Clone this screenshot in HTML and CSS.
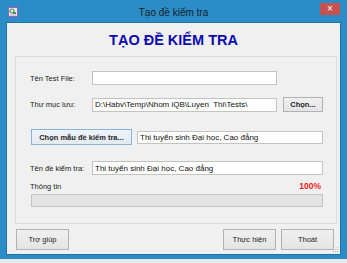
FILE: index.html
```html
<!DOCTYPE html>
<html>

<head>
    <title>Tạo đề kiểm tra</title>
    <link rel="stylesheet" href="styles.css">
</head>

<body>
    <div class="window">
        <div class="titlebar">
            <div class="icon-box">
                <svg class="app-icon" width="10" height="10" viewBox="0 0 10 10">
                    <rect x="0.5" y="0.5" width="9" height="9" fill="#efe6f6" stroke="#9a5fc4"/>
                    <circle cx="4" cy="4" r="2" fill="none" stroke="#3f9c3a" stroke-width="1.2"/>
                    <rect x="5" y="5" width="3" height="2" fill="#3f9c3a"/>
                    <rect x="1.5" y="7.5" width="7" height="1" fill="#c9a6e3"/>
                </svg>
            </div>
            <div class="title">Tạo đề kiểm tra</div>
            <div class="close">×</div>
        </div>

        <div class="client">
            <h1 class="heading">TẠO ĐỀ KIỂM TRA</h1>

            <div class="group">
                <div class="row row-file">
                    <label class="label">Tên Test File:</label>
                    <input class="field field-short" type="text" value="">
                </div>
                <div class="row row-folder">
                    <label class="label">Thư mục lưu:</label>
                    <input class="field field-short" type="text" value="D:\Habv\Temp\Nhom iQB\Luyen  Thi\Tests\">
                    <button class="btn btn-bold btn-pick">Chọn...</button>
                </div>
                <div class="row row-template">
                    <button class="btn btn-bold btn-template">Chọn mẫu đề kiểm tra...</button>
                    <input class="field field-template" type="text" value="Thi tuyển sinh Đại học, Cao đẳng">
                </div>
                <div class="row row-name">
                    <label class="label">Tên đề kiểm tra:</label>
                    <input class="field field-long" type="text" value="Thi tuyển sinh Đại học, Cao đẳng">
                </div>
                <div class="row row-info">
                    <span class="label">Thông tin</span>
                    <span class="percent">100%</span>
                </div>
                <div class="progress"></div>
            </div>

            <div class="footer">
                <button class="btn btn-footer">Trợ giúp</button>
                <span class="spacer"></span>
                <button class="btn btn-footer">Thực hiện</button>
                <button class="btn btn-footer btn-exit">Thoát</button>
            </div>

            <svg class="grip" width="6" height="6" viewBox="0 0 6 6">
                <rect x="4" y="0" width="1" height="1" fill="#b8b8b8"/>
                <rect x="2" y="2" width="1" height="1" fill="#b8b8b8"/>
                <rect x="4" y="2" width="1" height="1" fill="#b8b8b8"/>
                <rect x="0" y="4" width="1" height="1" fill="#b8b8b8"/>
                <rect x="2" y="4" width="1" height="1" fill="#b8b8b8"/>
                <rect x="4" y="4" width="1" height="1" fill="#b8b8b8"/>
            </svg>
        </div>
    </div>
</body>

</html>
```

FILE: styles.css
```css
body {
    margin: 0;
    background: #e6eaed;
    font-family: "Liberation Sans", Arial, sans-serif;
    color: #1e1e1e;
}

.window {
    width: 347px;
    height: 259px;
    box-sizing: border-box;
    padding: 0 7px 5px 7px;
    background: #2b8cc6;
}

/* title bar */
.titlebar {
    display: flex;
    align-items: flex-start;
    height: 23px;
}

.icon-box {
    width: 20px;
}

.app-icon {
    display: block;
    margin: 7px 0 0 1px;
}

.title {
    flex: 1;
    margin-top: 7px;
    font-size: 10px;
    line-height: 12px;
    text-align: center;
    color: #14202a;
}

.close {
    width: 20px;
    height: 12px;
    margin-top: 3px;
    background: #c75050;
    color: #fff;
    font-size: 10px;
    line-height: 12px;
    text-align: center;
}

/* client area */
.client {
    position: relative;
    height: 231px;
    background: #f0f0f0;
    box-shadow: 0 0 0 1px #1f72a6;
}

.heading {
    margin: 0 0 6px 0;
    padding-top: 7px;
    height: 20px;
    font-size: 14.5px;
    line-height: 20px;
    font-weight: bold;
    text-align: center;
    color: #0c0cb2;
}

.group {
    height: 168px;
    box-sizing: border-box;
    margin: 0 3px 0 8px;
    padding: 14px 13px 0 14px;
    border: 1px solid #dcdcdc;
}

.row {
    display: flex;
    align-items: center;
}

.row-file {
    height: 14px;
}

.row-folder {
    height: 15px;
    margin-top: 12px;
}

.row-template {
    height: 16px;
    margin-top: 17px;
}

.row-name {
    height: 14px;
    margin-top: 16px;
}

.row-info {
    height: 10px;
    margin-top: 6px;
    justify-content: space-between;
}

.label {
    width: 62px;
    flex-shrink: 0;
    font-size: 7.5px;
    color: #222;
}

.field {
    height: 14px;
    box-sizing: border-box;
    margin: 0;
    padding: 0 2px;
    border: 1px solid #c3c3c3;
    background: #fff;
    font-family: "Liberation Sans", Arial, sans-serif;
    font-size: 8px;
    color: #111;
    outline: none;
}

.field-short {
    width: 185px;
}

.field-template {
    width: 186px;
    height: 13px;
    margin-left: 5px;
}

.field-long {
    width: 231px;
}

.percent {
    margin-right: 2px;
    font-size: 8.5px;
    font-weight: bold;
    color: #f01c1c;
}

.progress {
    height: 13px;
    box-sizing: border-box;
    margin: 3px 0 0 1px;
    border: 1px solid #c4c4c4;
    background: #e4e4e4;
}

/* buttons */
.btn {
    box-sizing: border-box;
    margin: 0;
    padding: 0;
    border: 1px solid #b2b2b2;
    background: linear-gradient(#f0f0f0, #e4e4e4);
    font-family: "Liberation Sans", Arial, sans-serif;
    font-size: 7.5px;
    color: #1e1e1e;
}

.btn-bold {
    font-weight: bold;
}

.btn-pick {
    width: 40px;
    height: 15px;
    margin-left: 6px;
}

.btn-template {
    width: 101px;
    height: 16px;
    margin-left: 1px;
    border-color: #86b5de;
    background: linear-gradient(#eef3f8, #e2eaf2);
}

.footer {
    display: flex;
    padding: 5px 6px 0 9px;
}

.spacer {
    flex: 1;
}

.btn-footer {
    width: 53px;
    height: 21px;
}

.btn-exit {
    margin-left: 5px;
}

.grip {
    position: absolute;
    right: 1px;
    bottom: 1px;
}
```
